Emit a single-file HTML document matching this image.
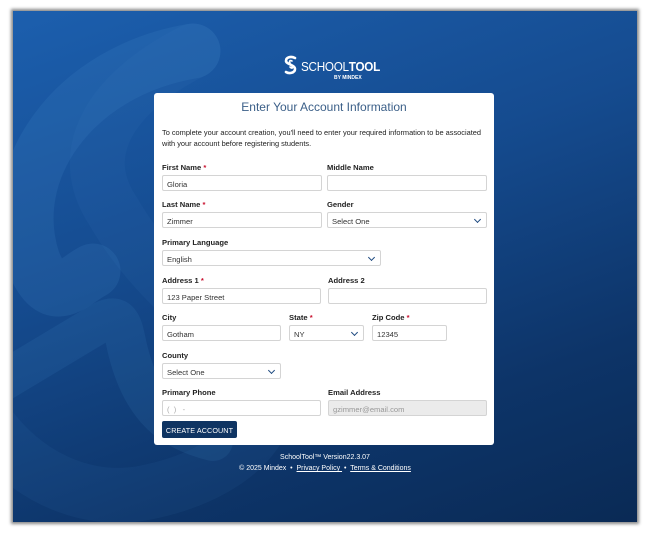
<!DOCTYPE html>
<html><head><style>
*{margin:0;padding:0;box-sizing:border-box}
body{width:650px;height:534px;background:#fff;position:relative;overflow:hidden;font-family:"Liberation Sans",sans-serif}
.frame{position:absolute;left:13px;top:11px;width:624px;height:511px;background:linear-gradient(160deg,#1c5fae 0%,#154b8f 40%,#0d3468 75%,#0a2a55 100%);box-shadow:0 0 3px 2px #888;overflow:hidden}
.card{position:absolute;left:154px;top:93px;width:340px;height:352px;background:#fff;border-radius:3px}
.a{position:absolute}
.lbl{position:absolute;font-size:7.6px;color:#222;font-weight:bold}
.lbl b{color:#c8102e}
.in{position:absolute;height:16px;border:1px solid #d4d4d4;border-radius:2px;background:#fff;font-size:7.6px;color:#333;padding:3.5px 0 0 4px}
.sel:after{content:"";position:absolute;right:6px;top:4px;width:4px;height:4px;border-right:1.3px solid #1e4a80;border-bottom:1.3px solid #1e4a80;transform:rotate(45deg)}
.ft{position:absolute;left:0;width:650px;text-align:center;color:#fff;font-size:7px}
.ft u{text-decoration:underline}
</style></head><body>
<div class="frame">
<svg width="624" height="511" style="position:absolute;left:0;top:0" fill="none" stroke="#4a90d0" stroke-linecap="round">
<path d="M180 40 C60 60 -10 160 20 250 C40 300 60 270 80 260" stroke-width="55" stroke-opacity="0.16"/>
<path d="M180 40 C100 80 60 140 100 200 C140 270 200 310 240 350 C280 400 230 460 140 480 C80 495 20 470 -20 420" stroke-width="55" stroke-opacity="0.08"/>
<path d="M-10 370 L90 310 C110 300 110 320 115 340 C130 400 160 420 200 430" stroke-width="40" stroke-opacity="0.12"/>
</svg>
</div>
<svg class="a" style="left:283px;top:55px" width="16" height="20" viewBox="0 0 16 20" fill="none" stroke="#fff" stroke-width="2.6" stroke-linecap="round"><path d="M12 3 C8 1 3 2 3 6 C3 9 12 10 12 14 C12 18 6 19 3 17"/><path d="M9 6 C7 5 6 6 7 8 M7 12 C9 14 10 13 9 12" stroke-width="1.6"/></svg>
<div class="a" style="left:301px;top:59px;color:#fff;font-size:13px;letter-spacing:-0.3px;transform:scaleX(0.9);transform-origin:left">SCHOOL<b>TOOL</b></div>
<div class="a" style="left:334px;top:75px;color:#fff;font-size:5px;font-weight:bold">BY MINDEX</div>
<div class="card"></div>
<div class="a" style="left:154px;top:100px;width:340px;text-align:center;font-size:12px;color:#3b5f88">Enter Your Account Information</div>
<div class="a" style="left:162px;top:127px;width:330px;font-size:7.4px;color:#222;line-height:11px">To complete your account creation, you'll need to enter your required information to be associated with your account before registering students.</div>
<div class="lbl" style="left:162px;top:163px">First Name <b>*</b></div>
<div class="lbl" style="left:327px;top:163px">Middle Name</div>
<div class="in" style="left:162px;top:175px;width:160px">Gloria</div>
<div class="in" style="left:327px;top:175px;width:160px"></div>
<div class="lbl" style="left:162px;top:200px">Last Name <b>*</b></div>
<div class="lbl" style="left:327px;top:200px">Gender</div>
<div class="in" style="left:162px;top:212px;width:160px">Zimmer</div>
<div class="in sel" style="left:327px;top:212px;width:160px">Select One</div>
<div class="lbl" style="left:162px;top:238px">Primary Language</div>
<div class="in sel" style="left:162px;top:250px;width:219px">English</div>
<div class="lbl" style="left:162px;top:276px">Address 1 <b>*</b></div>
<div class="lbl" style="left:328px;top:276px">Address 2</div>
<div class="in" style="left:162px;top:288px;width:159px">123 Paper Street</div>
<div class="in" style="left:328px;top:288px;width:159px"></div>
<div class="lbl" style="left:162px;top:313px">City</div>
<div class="lbl" style="left:289px;top:313px">State <b>*</b></div>
<div class="lbl" style="left:372px;top:313px">Zip Code <b>*</b></div>
<div class="in" style="left:162px;top:325px;width:119px">Gotham</div>
<div class="in sel" style="left:289px;top:325px;width:75px">NY</div>
<div class="in" style="left:372px;top:325px;width:75px">12345</div>
<div class="lbl" style="left:162px;top:351px">County</div>
<div class="in sel" style="left:162px;top:363px;width:119px">Select One</div>
<div class="lbl" style="left:162px;top:388px">Primary Phone</div>
<div class="lbl" style="left:328px;top:388px">Email Address</div>
<div class="in" style="left:162px;top:400px;width:159px;color:#aaa">(&nbsp;&nbsp;)&nbsp;&nbsp;&nbsp;-</div>
<div class="in" style="left:328px;top:400px;width:159px;background:#ebebeb;color:#999">gzimmer@email.com</div>
<div class="a" style="left:162px;top:421px;width:75px;height:17px;background:#0f3462;border-radius:2px;color:#fff;font-size:7.2px;text-align:center;padding-top:4.5px;letter-spacing:0.1px">CREATE ACCOUNT</div>
<div class="ft" style="top:454px">SchoolTool™ Version22.3.07</div>
<div class="ft" style="top:465px">© 2025 Mindex &nbsp;•&nbsp; <u>Privacy Policy </u> &nbsp;•&nbsp; <u>Terms &amp; Conditions</u></div>
</body></html>
